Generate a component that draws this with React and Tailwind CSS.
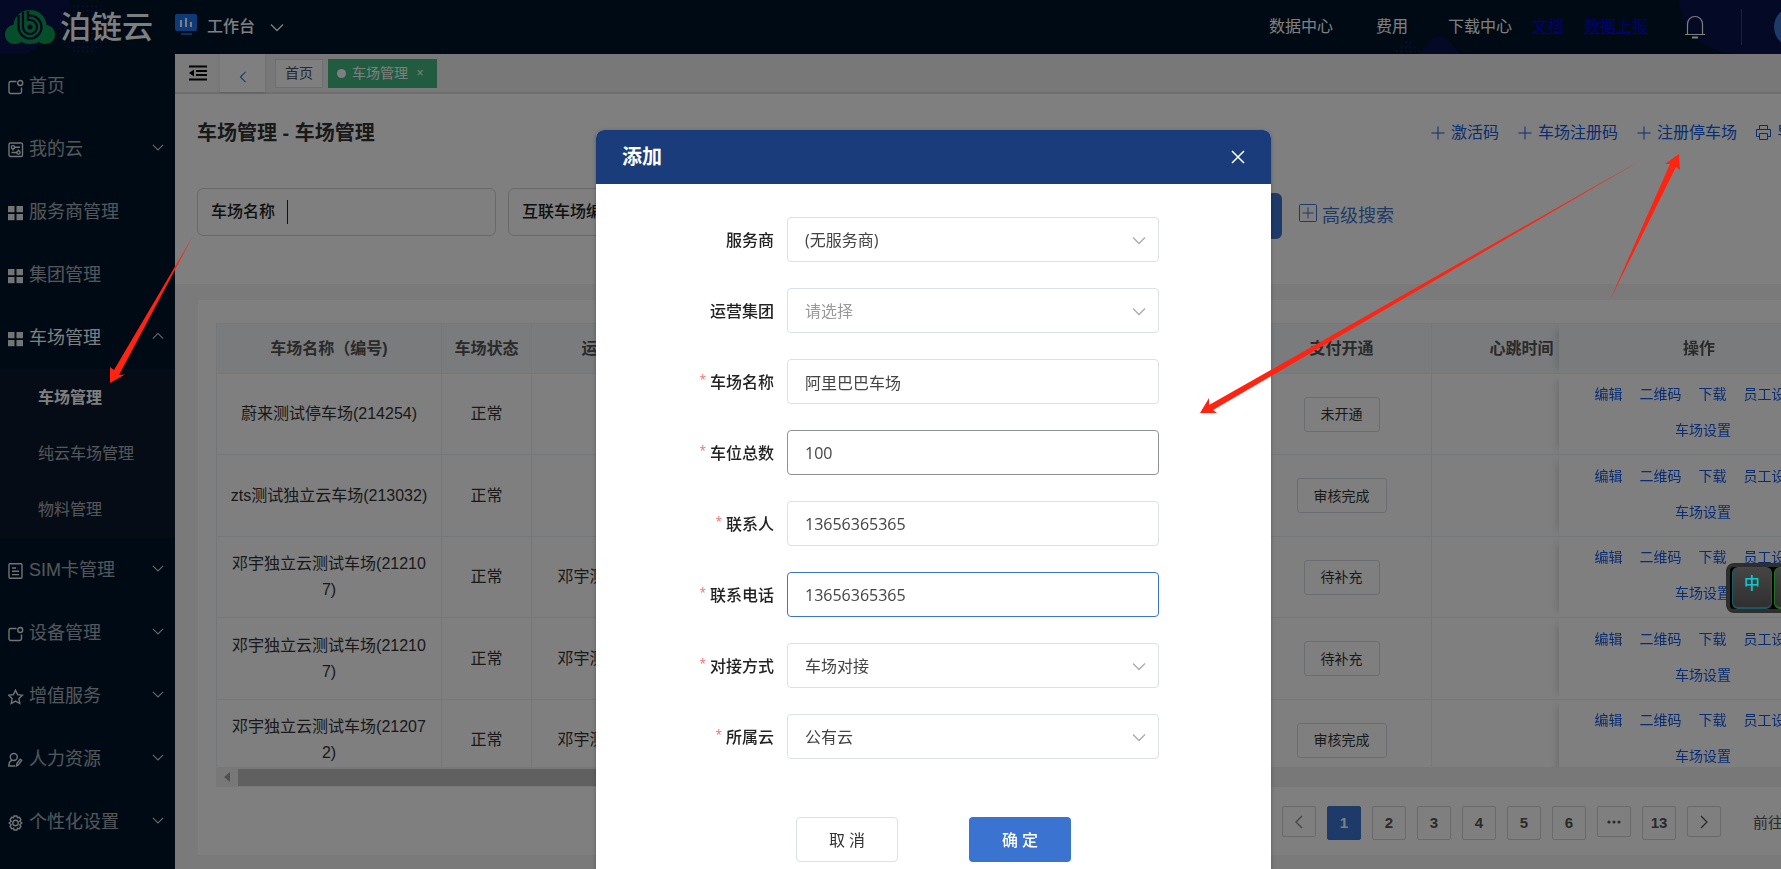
import React, { useState } from "react";

const Chevron = ({ className, up, left, right }) => {
  let d = "M1 4.5l6 6 6-6";
  if (up) d = "M1 10l6-6 6 6";
  if (left) d = "M10 1L4 7l6 6";
  if (right) d = "M4 1l6 6-6 6";
  return (
    <svg
      viewBox="0 0 14 14"
      fill="none"
      stroke="currentColor"
      strokeWidth="1.3"
      className={className}
    >
      <path d={d} />
    </svg>
  );
};

const icons = {
  box: (
    <>
      <path d="M8.500 2.500H2.700A1.700 1.700 0 0 0 1 4.200v8.600a1.700 1.700 0 0 0 1.700 1.700h9.100a1.700 1.700 0 0 0 1.700-1.700V8.500" />
      <circle cx="12.200" cy="4" r="2.500" />
    </>
  ),
  sliders: (
    <>
      <rect x="1" y="1" width="13.500" height="13.500" rx="1.500" />
      <circle cx="5" cy="5.200" r="1.600" />
      <circle cx="10.500" cy="10.500" r="1.600" />
      <path d="M6.600 5.200h5.400M3.500 10.500h5.400M5 7v1.500M10.500 7.500V9" />
    </>
  ),
  grid: (
    <g fill="currentColor" stroke="none">
      <rect x="0" y="1" width="6.500" height="6.200" />
      <rect x="8.500" y="1" width="6.500" height="6.200" />
      <rect x="0" y="9" width="6.500" height="6.200" />
      <rect x="8.500" y="9" width="6.500" height="6.200" />
    </g>
  ),
  doc: (
    <>
      <rect x="1" y=".7" width="13" height="14.600" rx="1" />
      <path d="M4 5h4M4 8.300h7M4 11.600h7" />
    </>
  ),
  star: (
    <path d="M7.500 1.200l2.100 4.400 4.800.6-3.500 3.400.9 4.900-4.300-2.400-4.300 2.400.9-4.900L.6 6.200l4.800-.6z" />
  ),
  people: (
    <>
      <circle cx="5.800" cy="5" r="3.500" />
      <path d="M4 8.300C2 8.900.8 10.700.8 14h6.500" />
      <path d="M8.600 13.800l.4-2.400 3.200-4.200 1.500 1.200-3.200 4.300z" />
    </>
  ),
  gear: (
    <>
      <path d="M6.100 1h2.800l.6 1.800 1.900-.4 1.500 2.300-1.100 1.500 2 1.800-2 1.800 1.100 1.500-1.500 2.300-1.900-.4-.6 1.800H6.100l-.6-1.800-1.900.4-1.500-2.300 1.100-1.500-2-1.800 2-1.800-1.100-1.500 1.500-2.300 1.900.4z" />
      <circle cx="7.500" cy="8" r="2.700" />
    </>
  ),
};

const MenuIcon = ({ name }) => (
  <svg
    viewBox="0 0 16 16"
    fill="none"
    stroke="currentColor"
    strokeWidth="1.4"
    className="mt-0.5 size-4 shrink-0 text-white/90"
  >
    {icons[name]}
  </svg>
);

const menu = [
  { label: "首页", icon: "box" },
  { label: "我的云", icon: "sliders", arrow: true },
  { label: "服务商管理", icon: "grid" },
  { label: "集团管理", icon: "grid" },
  {
    label: "车场管理",
    icon: "grid",
    arrow: true,
    children: ["车场管理", "纯云车场管理", "物料管理"],
  },
  { label: "SIM卡管理", icon: "doc", arrow: true },
  { label: "设备管理", icon: "box", arrow: true },
  { label: "增值服务", icon: "star", arrow: true },
  { label: "人力资源", icon: "people", arrow: true },
  { label: "个性化设置", icon: "gear", arrow: true },
];

const columns = [
  { title: "车场名称（编号)", width: "w-[225px]" },
  { title: "车场状态", width: "w-[90px]" },
  { title: "运营集团名", width: "w-[180px]" },
  { title: "联系人", width: "w-[180px]" },
  { title: "联系电话", width: "w-[180px]" },
  { title: "对接方式", width: "w-[180px]" },
  { title: "支付开通", width: "w-[180px]" },
  { title: "心跳时间", width: "w-[180px]" },
];

const rows = [
  { name: "蔚来测试停车场(214254)", group: "", pay: "未开通" },
  { name: "zts测试独立云车场(213032)", group: "", pay: "审核完成" },
  { name: "邓宇独立云测试车场(212107)", group: "邓宇测试运营集团", pay: "待补充" },
  { name: "邓宇独立云测试车场(212107)", group: "邓宇测试运营集团", pay: "待补充" },
  { name: "邓宇独立云测试车场(212072)", group: "邓宇测试运营集团", pay: "审核完成" },
];

const fields = [
  { id: "provider", label: "服务商", options: ["(无服务商)"] },
  { id: "group", label: "运营集团", options: ["请选择"], empty: true },
  { id: "name", label: "车场名称", required: true, value: "阿里巴巴车场" },
  { id: "total", label: "车位总数", required: true, value: "100", border: "border-[#8f9196]" },
  { id: "contact", label: "联系人", required: true, value: "13656365365" },
  { id: "phone", label: "联系电话", required: true, value: "13656365365", border: "border-[#3b74d0]" },
  { id: "mode", label: "对接方式", required: true, options: ["车场对接"] },
  { id: "cloud", label: "所属云", required: true, options: ["公有云"] },
];

const Logo = () => (
  <div className="flex w-[175px] shrink-0 items-center gap-[5px] pl-[5px]">
    <svg viewBox="0 0 50 34" className="w-[50px] shrink-0">
      <path
        d="M10 34C4 34 0 30 0 24.500 0 19.500 3.500 15.500 8.500 15 9.500 6 16 0 25 0s15.500 6 16.500 15c5 .5 8.500 4.500 8.500 9.500C50 30 46 34 40 34c-3 0-5-1-6.500-2.200C31.500 33.300 28.500 34 25 34s-6.500-.7-8.500-2.200C15 33 13 34 10 34z"
        fill="#0b9c54"
      />
      <g fill="none" stroke="#040f3c" strokeWidth="2.200">
        <path d="M13.500 5v12a11.500 11.500 0 1 0 11.500-11.500h-2" />
        <path d="M18 2v15a7 7 0 1 0 7-7h-2V1" />
      </g>
      <circle cx="25" cy="17" r="2.500" fill="#040f3c" />
    </svg>
    <span className="text-[31px] leading-none font-medium">泊链云</span>
  </div>
);

const Header = () => (
  <header className="relative flex h-[54px] items-center bg-[#001529] text-base text-white">
    {/* decorative shapes behind the bar */}
    <svg className="absolute inset-0 h-full w-full" aria-hidden="true">
      <defs>
        <pattern id="dots" width="4.500" height="4.500" patternUnits="userSpaceOnUse">
          <circle cx="2" cy="2" r="1" fill="#10206c" />
        </pattern>
      </defs>
      <path d="M0 0h70c-2 18-10 30-22 38-8 6-12 12-22 16H0z" fill="#08124a" />
      <circle cx="84" cy="28" r="26" fill="url(#dots)" />
      <path d="M1392 54l16-16 14 16z" fill="url(#dots)" />
      <path d="M1418 54c8-4 12-18 21-18s12 10 22 18z" fill="#08124a" />
      <path d="M1679 0c2 30 22 50 54 54h124V0z" fill="#08124a" />
    </svg>
    <div className="relative flex flex-1 items-center">
      <Logo />
      <svg viewBox="0 0 22 26" className="w-[22px]">
        <rect width="22" height="17" rx="2" fill="#1f74f0" />
        <path d="M6 13V6M11 13V4M16 13V8" stroke="#fff" strokeWidth="2" />
        <path d="M6 20h11" stroke="#1f74f0" strokeWidth="1.500" />
      </svg>
      <span className="ml-2.5 font-medium">工作台</span>
      <Chevron className="ml-[15px] size-3.5" />
    </div>
    <nav className="relative flex items-center pr-[43px]">
      <a href="#data">数据中心</a>
      <a href="#fee" className="ml-[43px]">费用</a>
      <a href="#download" className="ml-10">下载中心</a>
      <a href="#docs" className="ml-5 text-[#0000ee] underline">文档</a>
      <a href="#report" className="ml-5 text-[#0000ee] underline">数据上报</a>
      <svg
        viewBox="0 0 20 24"
        fill="none"
        stroke="currentColor"
        strokeWidth="1.2"
        className="ml-[37px] h-6 w-5"
      >
        <path d="M0 19.500h20M2.500 19.500V9a7.500 7.500 0 0 1 15 0v10.500" />
        <path d="M7 22.500h6" strokeWidth="2" />
      </svg>
      <span className="ml-9 h-9 w-px bg-white/20" />
      <span className="ml-8 size-10 rounded-full bg-[#3b74d0]" />
    </nav>
  </header>
);

const Sidebar = () => (
  <aside className="w-[175px] shrink-0 bg-[#001529] text-lg text-white/65">
    {menu.map((item) => (
      <div key={item.label}>
        <a
          href="#menu"
          className={`flex h-[63px] items-center gap-[5px] pr-[11px] pl-2 ${
            item.children ? "text-white" : ""
          }`}
        >
          <MenuIcon name={item.icon} />
          <span className="flex-1">{item.label}</span>
          {item.arrow && (
            <Chevron up={!!item.children} className="mb-1 size-3 text-white/80" />
          )}
        </a>
        {item.children && (
          <div className="bg-[#0a182c] pt-px text-base">
            {item.children.map((child, i) => (
              <a
                href="#sub"
                key={child}
                className={`flex h-14 items-center pl-[38px] ${
                  i === 0 ? "font-bold text-white" : ""
                }`}
              >
                {child}
              </a>
            ))}
          </div>
        )}
      </div>
    ))}
  </aside>
);

const TabBar = () => (
  <div className="flex h-10 items-center border-b-2 border-[#dcdcdc] bg-[#f0f0f0] text-sm">
    <button className="flex h-full w-[45px] items-center justify-center bg-[#f6f6f6]">
      <svg viewBox="0 0 18 16" className="w-[18px] text-black">
        <path
          d="M0 1.500h18M7 6h11M7 10h11M0 14.500h18"
          stroke="currentColor"
          strokeWidth="2.200"
        />
        <path d="M0 8l5-3.500v7z" fill="currentColor" />
      </svg>
    </button>
    <button className="flex h-full w-[45px] items-center justify-center bg-white text-[#3b74d0] shadow">
      <Chevron left className="mt-2 size-3" />
    </button>
    <a
      href="#home"
      className="ml-2.5 flex h-[29px] items-center border border-[#d8dce5] bg-white px-[9px] text-[#495060]"
    >
      首页
    </a>
    <span className="ml-[5px] flex h-[29px] items-center bg-[#42b983] px-[9px] text-white">
      <span className="mr-1.5 size-[9px] rounded-full bg-white" />
      车场管理
      <button className="ml-1 w-4 text-center text-xs">×</button>
    </span>
  </div>
);

const Plus = () => (
  <svg viewBox="0 0 14 14" stroke="currentColor" className="size-3.5">
    <path d="M7 .5v13M.5 7h13" />
  </svg>
);

const SearchBox = ({ id, label }) => (
  <div className="flex h-12 w-[299px] items-center rounded-md border border-[#d2d2d2] pl-[13px]">
    <label htmlFor={id} className="font-medium text-[#222]">
      {label}
    </label>
    <span className="ml-3 h-6 w-px bg-[#222]" />
    <input id={id} className="min-w-0 flex-1 px-3 outline-none" />
  </div>
);

const SearchPanel = () => (
  <section className="h-[190px] bg-white pr-12 pl-[22px]">
    <div className="flex h-[77px] items-center justify-between">
      <h1 className="text-xl font-bold text-[#333]">车场管理 - 车场管理</h1>
      <div className="flex items-center gap-[19px] text-[#1258e6]">
        {["激活码", "车场注册码", "注册停车场"].map((text) => (
          <button key={text} className="flex items-center gap-1.5">
            <Plus />
            {text}
          </button>
        ))}
        <button className="flex items-center gap-1.5">
          <svg
            viewBox="0 0 15 15"
            fill="none"
            stroke="currentColor"
            className="size-[15px]"
          >
            <path d="M3.500 4.500v-4h8v4M3.500 11.500h-3v-7h14v7h-3M3.500 8.500h8v6h-8z" />
          </svg>
          导出
        </button>
      </div>
    </div>
    <div className="mt-3.5 flex items-center gap-3">
      <SearchBox id="lotName" label="车场名称" />
      <SearchBox id="lotCode" label="互联车场编号" />
      <SearchBox id="lotPhone" label="联系电话" />
      <div className="mt-2 flex items-center gap-[17px] text-[#3b74d0]">
        <button className="h-[46px] w-38 rounded-md bg-[#3b74d0] text-white">
          搜索
        </button>
        <button className="flex items-center gap-[5px] text-lg">
          <svg
            viewBox="0 0 18 18"
            fill="none"
            stroke="currentColor"
            className="mb-1.5 size-[18px]"
          >
            <rect x=".5" y=".5" width="17" height="17" rx="1" />
            <path d="M9 3.500v11M3.500 9h11" />
          </svg>
          高级搜索
        </button>
      </div>
    </div>
  </section>
);

const fixedCell =
  "sticky right-0 w-[280px] border-b border-[#ebeef5] shadow-[-8px_0_8px_-6px_rgba(0,0,0,0.15)]";

const LotTable = () => (
  <div className="h-[444px] overflow-hidden border-t border-l border-[#ebeef5]">
    <table className="w-[1675px] table-fixed border-separate border-spacing-0 text-center text-[#333]">
      <thead>
        <tr className="h-[50px] text-[#555]">
          {columns.map((col) => (
            <th
              key={col.title}
              className={`${col.width} border-r border-b border-[#ebeef5] bg-[#f3f6fa] font-bold`}
            >
              {col.title}
            </th>
          ))}
          <th className={`${fixedCell} bg-[#f3f6fa]`}>操作</th>
        </tr>
      </thead>
      <tbody>
        {rows.map((row, i) => (
          <tr key={i} className="odd:h-[81px] even:h-[82px]">
            <td className="border-r border-b border-[#ebeef5] px-3 leading-[26px] break-all">
              {row.name}
            </td>
            <td className="border-r border-b border-[#ebeef5]">正常</td>
            <td className="border-r border-b border-[#ebeef5]">{row.group}</td>
            <td className="border-r border-b border-[#ebeef5]"></td>
            <td className="border-r border-b border-[#ebeef5]"></td>
            <td className="border-r border-b border-[#ebeef5]"></td>
            <td className="border-r border-b border-[#ebeef5]">
              <button className="h-[35px] rounded-[3px] border border-[#d8dbe2] px-4 text-sm">
                {row.pay}
              </button>
            </td>
            <td className="border-r border-b border-[#ebeef5]"></td>
            <td className={`${fixedCell} bg-white pb-1 text-sm text-[#1258e6]`}>
              <div className="flex h-9 items-center justify-center gap-[17px] pr-1">
                <a href="#edit">编辑</a>
                <a href="#qr">二维码</a>
                <a href="#down">下载</a>
                <a href="#staff">员工设置</a>
              </div>
              <div className="flex h-9 items-center justify-center pl-2">
                <a href="#setting">车场设置</a>
              </div>
            </td>
          </tr>
        ))}
      </tbody>
    </table>
  </div>
);

const pageBtn =
  "flex w-[34px] items-center justify-center rounded-[2px] border text-[15px] font-bold";

const Pagination = () => (
  <div className="mt-[19px] flex items-start justify-end gap-[11px] text-[#555]">
    <button className={`${pageBtn} h-[31px] border-[#d4d4d4] text-[#888]`}>
      <Chevron left className="size-3.5" />
    </button>
    {["1", "2", "3", "4", "5", "6", "...", "13"].map((p) => (
      <button
        key={p}
        className={`${pageBtn} ${p === "..." ? "h-[31px]" : "h-[34px]"} ${
          p === "1"
            ? "border-[#3b74d0] bg-[#3b74d0] text-white"
            : "border-[#d4d4d4]"
        }`}
      >
        {p === "..." ? (
          <svg viewBox="0 0 14 4" className="w-3.5 fill-current">
            <circle cx="2" cy="2" r="1.600" />
            <circle cx="7" cy="2" r="1.600" />
            <circle cx="12" cy="2" r="1.600" />
          </svg>
        ) : (
          p
        )}
      </button>
    ))}
    <button className={`${pageBtn} h-[31px] border-[#d4d4d4]`}>
      <Chevron right className="size-3.5" />
    </button>
    <label className="ml-[21px] flex h-[34px] w-[86px] items-center gap-2 text-[15px]">
      前往
      <input
        defaultValue="1"
        className="h-7 w-6 rounded border border-[#d4d4d4] text-center"
      />
      页
    </label>
  </div>
);

const Field = ({ field }) => {
  const box = `h-[45px] w-full rounded border bg-white px-[17px] outline-none ${
    field.border || "border-[#dcdfe6]"
  }`;
  return (
    <div className="flex items-center gap-[13px]">
      <label
        htmlFor={field.id}
        className="w-[178px] text-right font-medium text-[#222]"
      >
        {field.required && (
          <span className="mr-1 align-top text-xs leading-5 font-normal text-[#f56c6c]">
            *
          </span>
        )}
        {field.label}
      </label>
      <div className="relative w-[372px]">
        {field.options ? (
          <>
            <select
              id={field.id}
              className={`${box} appearance-none ${
                field.empty ? "text-[#999]" : "text-[#444]"
              }`}
            >
              {field.options.map((o) => (
                <option key={o}>{o}</option>
              ))}
            </select>
            <Chevron className="pointer-events-none absolute top-4 right-[13px] size-3.5 text-[#aaa]" />
          </>
        ) : (
          <input
            id={field.id}
            defaultValue={field.value}
            className={`${box} text-[#444]`}
          />
        )}
      </div>
    </div>
  );
};

const AddDialog = ({ onClose }) => (
  <div className="fixed inset-0 flex items-start justify-center overflow-hidden bg-black/50 pt-[130px] pl-[86px] font-['Open_Sans','Noto_Sans_CJK_SC',sans-serif]">
    <div
      role="dialog"
      aria-label="添加"
      className="w-[675px] rounded-lg bg-white shadow-[0_1px_4px_rgba(0,0,0,0.3)]"
    >
      <div className="flex h-[54px] items-center justify-between rounded-t-lg bg-[#1a3c7a] px-[26px] text-white">
        <h2 className="text-xl font-bold">添加</h2>
        <button onClick={onClose} aria-label="关闭">
          <svg
            viewBox="0 0 14 14"
            stroke="currentColor"
            strokeWidth="1.5"
            className="size-3.5"
          >
            <path d="M1 1l12 12M13 1L1 13" />
          </svg>
        </button>
      </div>
      <form className="flex flex-col gap-[26px] pt-[33px]">
        {fields.map((field) => (
          <Field key={field.id} field={field} />
        ))}
      </form>
      <div className="flex justify-center gap-[71px] pt-[58px] pb-10">
        <button
          onClick={onClose}
          className="h-[45px] w-[102px] rounded border border-[#dcdfe6] text-[#333]"
        >
          取 消
        </button>
        <button className="h-[45px] w-[102px] rounded bg-[#3b74d0] font-medium text-white">
          确 定
        </button>
      </div>
    </div>
  </div>
);

// floating input method badge
const ImeBadge = () => (
  <div className="fixed top-[563px] left-[1726px] flex h-[50px] w-24 gap-0.5 rounded-lg border-4 border-[#2e2e2e] bg-black pl-0.5">
    <span className="flex w-10 items-center justify-center rounded-md border border-b-2 border-[#1a5a62] bg-linear-to-b from-[#454545] to-[#303030] pb-2 text-base font-medium text-[#10c4d4]">
      中
    </span>
    <span className="w-10 rounded-md border border-b-2 border-[#1a7a1a] bg-linear-to-b from-[#454545] to-[#303030]" />
  </div>
);

const Arrows = () => (
  <svg
    viewBox="0 0 1781 869"
    className="pointer-events-none fixed top-0 left-0 w-[1781px]"
    fill="#ff2412"
  >
    <path d="M110 383L110 367L114 370L193 236L119 375L125 374.500Z" />
    <path d="M1200 413L1209 398L1209 405L1643 159L1213 410L1217 413Z" />
    <path d="M1679 154L1665 164L1670 164L1610 300L1676 167L1680 170Z" />
  </svg>
);

const App = () => {
  const [showDialog, setShowDialog] = useState(true);

  return (
    <div className="h-screen overflow-hidden font-['Liberation_Sans','Noto_Sans_CJK_SC',sans-serif] text-base">
      <div className="min-w-[1857px]">
        <Header />
        <div className="flex min-h-[calc(100vh-54px)]">
          <Sidebar />
          <main className="min-w-0 flex-1 bg-[#f5f5f5]">
            <TabBar />
            <SearchPanel />
            <section className="mt-4 ml-[23px] h-[555px] bg-white pt-[23px] pr-[18px] pl-[18px]">
              <LotTable />
              <div className="flex h-5 items-center bg-[#f1f1f1]">
                <svg viewBox="0 0 6 10" className="ml-2 w-[6px] fill-[#a0a0a0]">
                  <path d="M6 0v10L0 5z" />
                </svg>
                <span className="ml-2 h-[17px] w-3/5 bg-[#c1c1c1]" />
              </div>
              <Pagination />
            </section>
          </main>
        </div>
      </div>
      {showDialog && <AddDialog onClose={() => setShowDialog(false)} />}
      <ImeBadge />
      <Arrows />
    </div>
  );
};

export default App;
